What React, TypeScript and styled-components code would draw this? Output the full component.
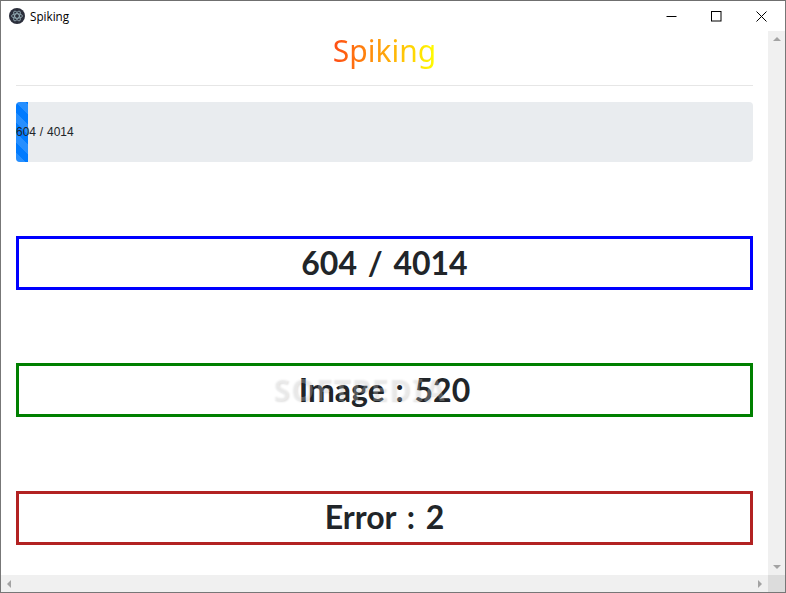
import styled, { createGlobalStyle } from "styled-components";

const GlobalStyle = createGlobalStyle`
  html, body {
    margin: 0;
    padding: 0;
    background: #fff;
    overflow: hidden;
  }
  * {
    box-sizing: border-box;
  }
`;

const Win = styled.div`
  width: 786px;
  height: 593px;
  border: 1px solid #777;
  border-top-color: #6f6f6f;
  display: flex;
  flex-direction: column;
  position: relative;
  font-family: "Noto Sans", "Open Sans", sans-serif;
  color: #212529;
  background: #fff;
`;

const TitleBar = styled.div`
  height: 30px;
  flex: none;
  display: flex;
  align-items: center;
  padding-left: 8px;
  font-family: "Open Sans", "Noto Sans", sans-serif;
  font-size: 11.7px;
  color: #000;
`;
const AppName = styled.span`
  margin-left: 5px;
`;
const WinButtons = styled.div`
  margin-left: auto;
  margin-right: 1px;
  display: flex;
`;
const WinBtn = styled.div`
  width: 45px;
  height: 30px;
  display: flex;
  align-items: center;
  justify-content: center;
`;

const Middle = styled.div`
  flex: 1;
  display: flex;
  min-height: 0;
`;
const Content = styled.div`
  flex: 1;
  padding: 0 15px;
`;
const Heading = styled.h1`
  margin: 0;
  height: 54px;
  padding-top: 1px;
  text-align: center;
  font-size: 30px;
  line-height: 38px;
  font-weight: 400;
`;
const Gradient = styled.span`
  background: linear-gradient(90deg, #ff4b14, #ffff00);
  -webkit-background-clip: text;
  background-clip: text;
  color: transparent;
`;
const Rule = styled.hr`
  margin: 0 0 16px;
  border: 0;
  border-top: 1px solid #e6e6e6;
`;
const Progress = styled.div`
  height: 60px;
  background: #e9ecef;
  border-radius: 4px;
  overflow: hidden;
  position: relative;
  margin-bottom: 74px;
`;
const ProgressFill = styled.div`
  width: 12px;
  height: 100%;
  background-color: #007bff;
  background-image: linear-gradient(
    45deg,
    rgba(255, 255, 255, 0.15) 25%,
    transparent 25%,
    transparent 50%,
    rgba(255, 255, 255, 0.15) 50%,
    rgba(255, 255, 255, 0.15) 75%,
    transparent 75%
  );
  background-size: 20px 20px;
`;
const ProgressLabel = styled.span`
  position: absolute;
  left: 0;
  top: 0;
  line-height: 60px;
  font-family: "Liberation Sans", Arial, sans-serif;
  font-size: 12px;
  word-spacing: 0.5px;
  white-space: nowrap;
`;
const StatBox = styled.div<{ $color: string }>`
  height: 54px;
  margin-bottom: 73.4px;
  padding-bottom: 2px;
  border: 3px solid ${(p) => p.$color};
  display: flex;
  align-items: center;
  justify-content: center;
  font-family: Lato, "Noto Sans", sans-serif;
  font-size: 32px;
  font-weight: 700;
  word-spacing: 3px;
  white-space: pre;
`;

const VScroll = styled.div`
  width: 17px;
  flex: none;
  background: #f0f0f0;
  display: flex;
  flex-direction: column;
  align-items: center;
  justify-content: space-between;
  padding: 6px 0;
`;
const HScroll = styled.div`
  height: 17px;
  flex: none;
  background: #f0f0f0;
  display: flex;
  align-items: center;
  padding-left: 6px;
`;
const HTrack = styled.div`
  flex: 1;
  display: flex;
  justify-content: space-between;
  padding-right: 6px;
`;
const Corner = styled.div`
  width: 17px;
  height: 17px;
  background: #dcdcdc;
`;
const Watermark = styled.div`
  position: absolute;
  left: 272px;
  top: 368px;
  font-family: "Noto Sans", sans-serif;
  font-size: 30px;
  font-weight: 700;
  letter-spacing: 1px;
  color: rgba(255, 255, 255, 0.25);
  text-shadow: 1px 1px 2px rgba(0, 0, 0, 0.12);
  pointer-events: none;
`;

function Arrow({ dir }: { dir: "up" | "down" | "left" | "right" }) {
  const pts = {
    up: "0,4 4,0 8,4",
    down: "0,0 8,0 4,4",
    left: "4,0 4,8 0,4",
    right: "0,0 4,4 0,8",
  }[dir];
  const w = dir === "up" || dir === "down" ? 8 : 4;
  const h = dir === "up" || dir === "down" ? 4 : 8;
  return (
    <svg width={w} height={h} viewBox={`0 0 ${w} ${h}`}>
      <polygon points={pts} fill="#a3a3a3" />
    </svg>
  );
}

function ElectronIcon() {
  return (
    <svg width="16" height="16" viewBox="0 0 16 16">
      <circle cx="8" cy="8" r="8" fill="#2b2e3b" />
      <g fill="none" stroke="#a9c4cc" strokeWidth="0.7">
        <ellipse cx="8" cy="8" rx="5.5" ry="2.2" />
        <ellipse cx="8" cy="8" rx="5.5" ry="2.2" transform="rotate(60 8 8)" />
        <ellipse cx="8" cy="8" rx="5.5" ry="2.2" transform="rotate(120 8 8)" />
      </g>
    </svg>
  );
}

export default function App() {
  return (
    <Win>
      <GlobalStyle />
      <TitleBar>
        <ElectronIcon />
        <AppName>Spiking</AppName>
        <WinButtons>
          <WinBtn>
            <svg width="11" height="11" viewBox="0 0 11 11">
              <path d="M0.5 5.5H10.5" stroke="#000" fill="none" />
            </svg>
          </WinBtn>
          <WinBtn>
            <svg width="11" height="11" viewBox="0 0 11 11">
              <rect x="0.5" y="0.5" width="9.5" height="9.5" stroke="#000" fill="none" />
            </svg>
          </WinBtn>
          <WinBtn>
            <svg width="11" height="11" viewBox="0 0 11 11">
              <path d="M0.5 0.5L10.5 10.5M10.5 0.5L0.5 10.5" stroke="#000" fill="none" />
            </svg>
          </WinBtn>
        </WinButtons>
      </TitleBar>
      <Middle>
        <Content>
          <Heading>
            <Gradient>Spiking</Gradient>
          </Heading>
          <Rule />
          <Progress>
            <ProgressFill />
            <ProgressLabel>604 / 4014</ProgressLabel>
          </Progress>
          <StatBox $color="#0000ff">604 / 4014</StatBox>
          <StatBox $color="#008000">Image : 520</StatBox>
          <StatBox $color="#b22222">Error : 2</StatBox>
        </Content>
        <VScroll>
          <Arrow dir="up" />
          <Arrow dir="down" />
        </VScroll>
      </Middle>
      <HScroll>
        <HTrack>
          <Arrow dir="left" />
          <Arrow dir="right" />
        </HTrack>
        <Corner />
      </HScroll>
      <Watermark>SOFTPEDIA</Watermark>
    </Win>
  );
}
